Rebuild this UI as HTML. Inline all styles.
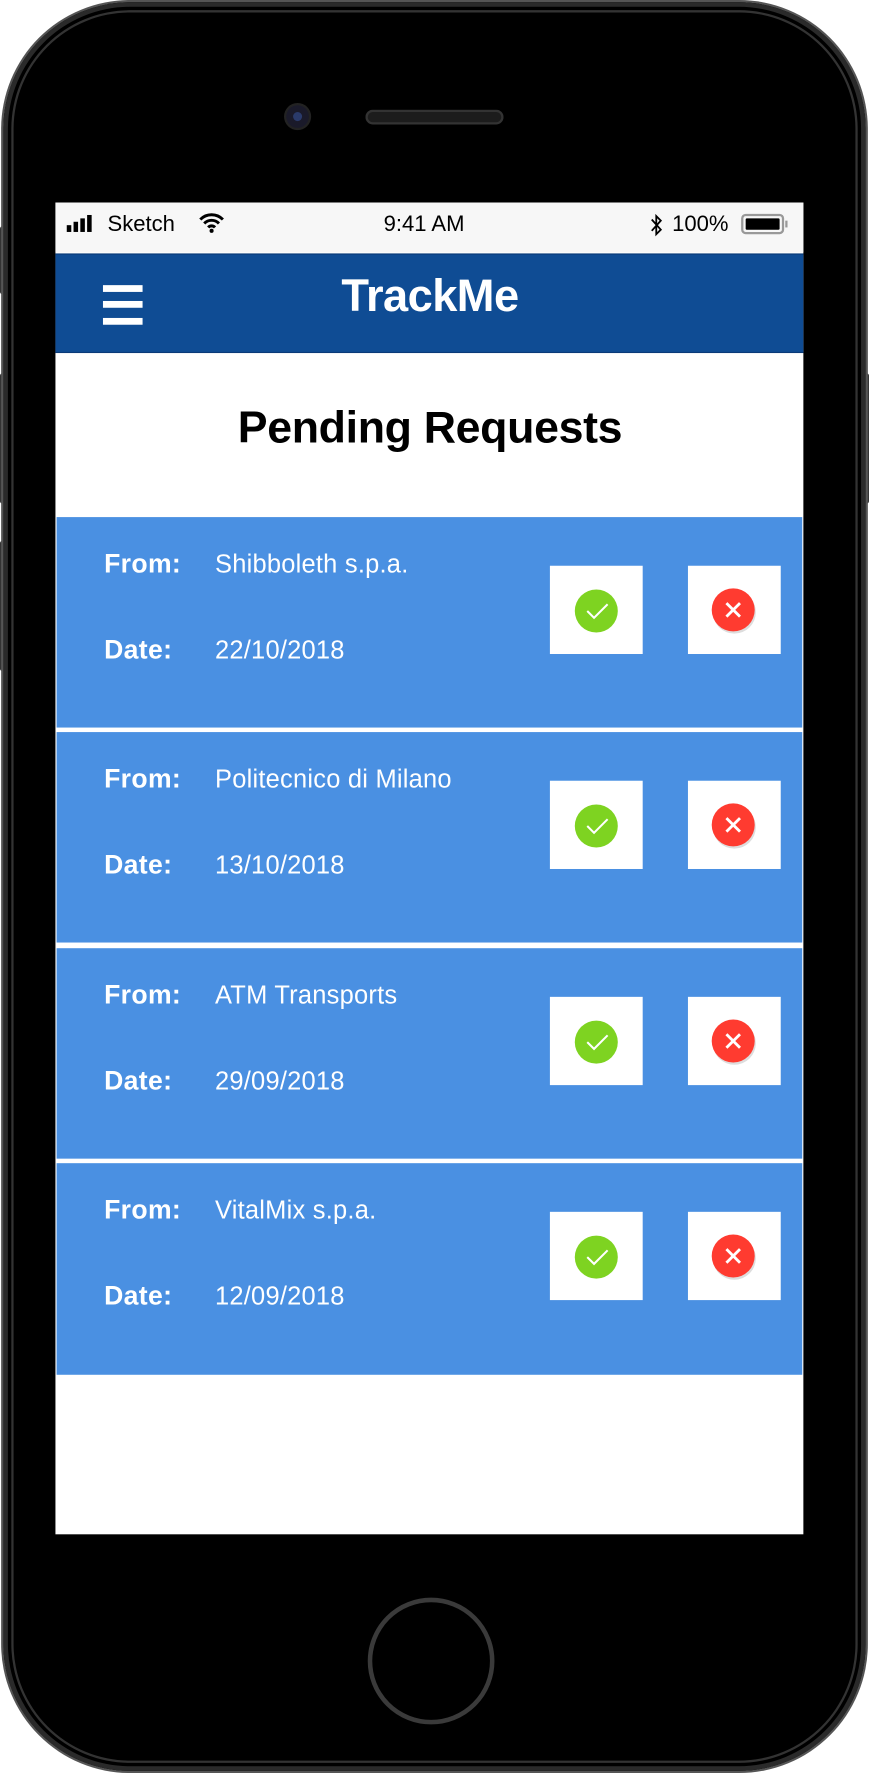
<!DOCTYPE html>
<html><head><meta charset="utf-8"><style>
html,body{margin:0;padding:0;background:#fff;overflow:hidden}
#w{width:768px;height:1571px;position:relative;transform:scale(1.1315);transform-origin:0 0;font-family:"Liberation Sans",Arial,sans-serif}
.a{position:absolute}
.phone{left:3px;top:2px;width:762px;height:1563px;border-radius:112px;background:#000;box-shadow:0 0 0 2px #555,inset 0 0 0 4px #2a2a2a,inset 0 0 0 7px #000,inset 0 0 0 9px #333}
.row{position:absolute;left:50px;width:659px;height:186px;background:#4a90e2;color:#fff}
.lb{position:absolute;left:42px;font-weight:bold;font-size:23.5px;letter-spacing:0.3px}
.vl{position:absolute;left:140px;font-size:22.5px;letter-spacing:0.2px}
.bx{position:absolute;top:43px;width:82px;height:78px;background:#fff}
</style></head><body><div id="w">
<div class="a" style="left:0;top:200px;width:5px;height:60px;background:#333;border-radius:2px"></div>
<div class="a" style="left:0;top:330px;width:5px;height:115px;background:#333;border-radius:2px"></div>
<div class="a" style="left:0;top:478px;width:5px;height:115px;background:#333;border-radius:2px"></div>
<div class="a" style="left:763px;top:330px;width:5px;height:115px;background:#333;border-radius:2px"></div>
<div class="a phone"></div>
<div class="a" style="left:253px;top:93px;width:20px;height:20px;border-radius:50%;background:#1a1a2a;box-shadow:0 0 0 2px #222"></div>
<div class="a" style="left:259px;top:99px;width:8px;height:8px;border-radius:50%;background:#2a3a6a"></div>
<div class="a" style="left:323px;top:97px;width:122px;height:13px;border-radius:7px;background:#1c1c1c;box-shadow:inset 0 0 0 2px #333"></div>
<div class="a" style="left:325px;top:1412px;width:112px;height:112px;border-radius:50%;border:4px solid #3a3a3a;box-sizing:border-box"></div>
<div class="a" style="left:49px;top:179px;width:661px;height:1177px;background:#fff"></div>
<div class="a" style="left:49px;top:179px;width:661px;height:44px;background:#f7f7f7;font-size:19.5px;color:#000">
 <div class="a" style="left:10px;top:20px;width:4px;height:6px;background:#000"></div>
 <div class="a" style="left:16px;top:17px;width:4px;height:9px;background:#000"></div>
 <div class="a" style="left:22px;top:14px;width:4px;height:12px;background:#000"></div>
 <div class="a" style="left:28px;top:11px;width:4px;height:15px;background:#000"></div>
 <div class="a" style="left:46px;top:8px">Sketch</div>
 <svg class="a" style="left:126px;top:9px" width="24" height="18" viewBox="0 0 24 18"><path d="M2 6a14 14 0 0 1 20 0M5.5 9.5a9 9 0 0 1 13 0M9 13a4 4 0 0 1 6 0" stroke="#000" stroke-width="2.6" fill="none"/><circle cx="12" cy="16" r="1.8"/></svg>
 <div class="a" style="left:290px;top:8px">9:41 AM</div>
 <svg class="a" style="left:525px;top:9px" width="12" height="22" viewBox="0 0 12 22"><path d="M2 6l8 9-4 4V3l4 4-8 9" stroke="#000" stroke-width="1.6" fill="none"/></svg>
 <div class="a" style="left:545px;top:8px">100%</div>
 <div class="a" style="left:606px;top:10px;width:38px;height:18px;border:2px solid #999;border-radius:4px;box-sizing:border-box;padding:2px"><div style="background:#000;width:100%;height:100%;border-radius:1px"></div></div>
 <div class="a" style="left:645px;top:16px;width:2px;height:6px;background:#999"></div>
</div>
<div class="a" style="left:49px;top:224px;width:661px;height:86px;background:#0f4c94;border-top:1px solid #0a3a78;border-bottom:1px solid #0a3a78"></div>
<div class="a" style="left:91px;top:252px;width:35px;height:6px;background:#fff"></div>
<div class="a" style="left:91px;top:266px;width:35px;height:6px;background:#fff"></div>
<div class="a" style="left:91px;top:281px;width:35px;height:6px;background:#fff"></div>
<div class="a" style="left:230px;top:240px;width:300px;text-align:center;color:#fff;font-weight:bold;font-size:40px;letter-spacing:-0.5px">TrackMe</div>
<div class="a" style="left:130px;top:356px;width:500px;text-align:center;color:#000;font-weight:bold;font-size:39.5px;letter-spacing:-0.3px">Pending Requests</div>

<div class="row" style="top:457px">
<div class="lb" style="top:28px">From:</div><div class="vl" style="top:29px">Shibboleth s.p.a.</div>
<div class="lb" style="top:104px">Date:</div><div class="vl" style="top:105px">22/10/2018</div>
<div class="bx" style="left:436px"><svg width="82" height="78"><circle cx="41" cy="40" r="19" fill="#7ed321"/><path d="M33 40l6 6 12-12" stroke="#fff" stroke-width="1.8" fill="none"/></svg></div>
<div class="bx" style="left:558px"><svg width="82" height="78"><circle cx="41" cy="41" r="19" fill="#ddd"/><circle cx="40" cy="39" r="19" fill="#ff3b30"/><path d="M34 33l12 12M46 33l-12 12" stroke="#fff" stroke-width="2.5"/></svg></div>
</div>
<div class="row" style="top:647px">
<div class="lb" style="top:28px">From:</div><div class="vl" style="top:29px">Politecnico di Milano</div>
<div class="lb" style="top:104px">Date:</div><div class="vl" style="top:105px">13/10/2018</div>
<div class="bx" style="left:436px"><svg width="82" height="78"><circle cx="41" cy="40" r="19" fill="#7ed321"/><path d="M33 40l6 6 12-12" stroke="#fff" stroke-width="1.8" fill="none"/></svg></div>
<div class="bx" style="left:558px"><svg width="82" height="78"><circle cx="41" cy="41" r="19" fill="#ddd"/><circle cx="40" cy="39" r="19" fill="#ff3b30"/><path d="M34 33l12 12M46 33l-12 12" stroke="#fff" stroke-width="2.5"/></svg></div>
</div>
<div class="row" style="top:838px">
<div class="lb" style="top:28px">From:</div><div class="vl" style="top:29px">ATM Transports</div>
<div class="lb" style="top:104px">Date:</div><div class="vl" style="top:105px">29/09/2018</div>
<div class="bx" style="left:436px"><svg width="82" height="78"><circle cx="41" cy="40" r="19" fill="#7ed321"/><path d="M33 40l6 6 12-12" stroke="#fff" stroke-width="1.8" fill="none"/></svg></div>
<div class="bx" style="left:558px"><svg width="82" height="78"><circle cx="41" cy="41" r="19" fill="#ddd"/><circle cx="40" cy="39" r="19" fill="#ff3b30"/><path d="M34 33l12 12M46 33l-12 12" stroke="#fff" stroke-width="2.5"/></svg></div>
</div>
<div class="row" style="top:1028px;height:187px">
<div class="lb" style="top:28px">From:</div><div class="vl" style="top:29px">VitalMix s.p.a.</div>
<div class="lb" style="top:104px">Date:</div><div class="vl" style="top:105px">12/09/2018</div>
<div class="bx" style="left:436px"><svg width="82" height="78"><circle cx="41" cy="40" r="19" fill="#7ed321"/><path d="M33 40l6 6 12-12" stroke="#fff" stroke-width="1.8" fill="none"/></svg></div>
<div class="bx" style="left:558px"><svg width="82" height="78"><circle cx="41" cy="41" r="19" fill="#ddd"/><circle cx="40" cy="39" r="19" fill="#ff3b30"/><path d="M34 33l12 12M46 33l-12 12" stroke="#fff" stroke-width="2.5"/></svg></div>
</div>
</div></body></html>
